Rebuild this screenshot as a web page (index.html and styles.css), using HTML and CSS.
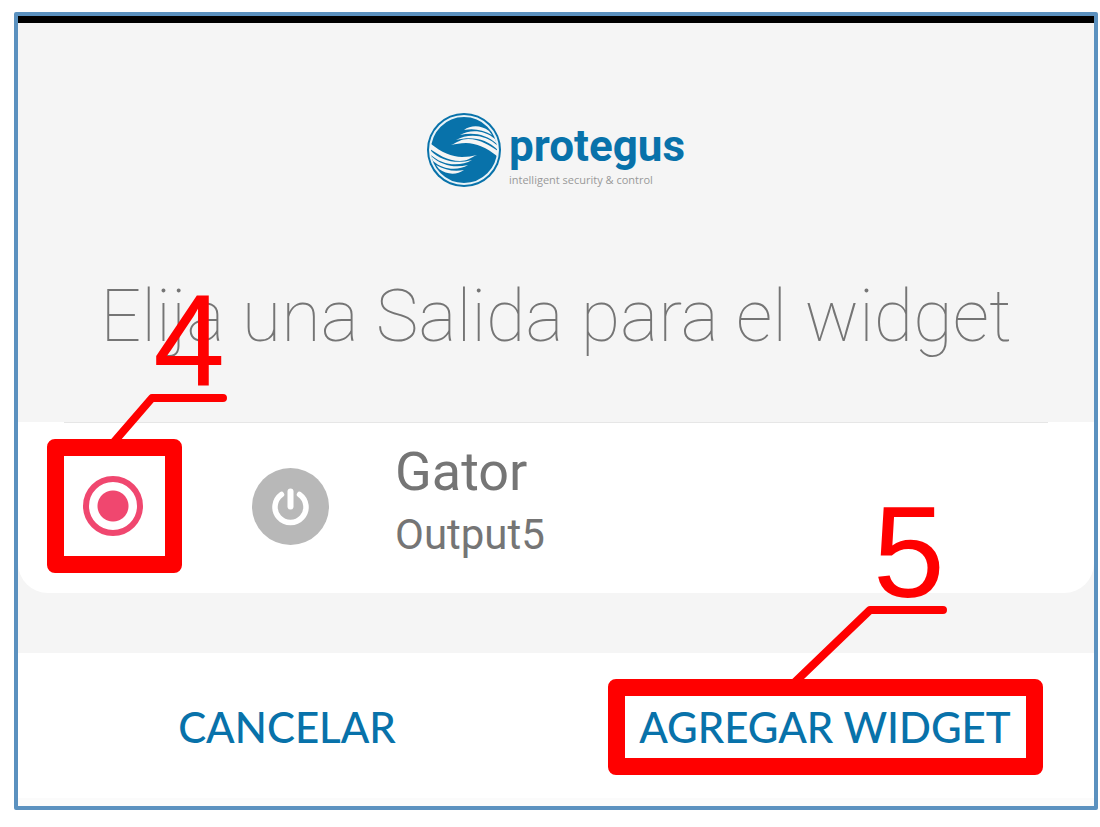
FILE: index.html
```html
<!DOCTYPE html>
<html lang="es">
<head>
<meta charset="utf-8">
<meta name="viewport" content="width=device-width, initial-scale=1">
<title>Elija una Salida para el widget</title>
<link rel="stylesheet" href="styles.css">
</head>
<body>
<main class="screen">
  <header class="header">
    <div class="brand">
      <svg class="brand-mark" viewBox="0 0 74 74" aria-hidden="true">
        <circle cx="37" cy="37" r="37" fill="#0872aa"/>
        <circle cx="37" cy="37" r="34" fill="none" stroke="#e8f3f8" stroke-width="2"/>
        <g id="wing" fill="#f5f5f5">
          <path d="M37 17C44 12 54 12 62 18L65 22C56 17 47 15 37 17Z"/>
          <path d="M33 22C43 16 58 17 68 26L70 31C59 21 46 19 33 22Z"/>
          <path d="M29 27C41 20 59 21 71 33L71 37C59 25 44 23 29 27Z"/>
          <path d="M24 32C31 29 34 26 41 26C54 26 63 33 71 38L70 43C60 35 49 30 39 30C33 30 29 31 24 32Z"/>
        </g>
        <use href="#wing" transform="rotate(180 37 37)"/>
      </svg>
      <div class="brand-text">
        <span class="brand-name">protegus</span>
        <span class="brand-tagline">intelligent security &amp; control</span>
      </div>
    </div>
    <h1 class="title">Elija una Salida para el widget</h1>
  </header>

  <section class="outputs">
    <div class="output">
      <span class="marked marked-radio">
        <input class="radio" type="radio" name="output" id="output5" checked>
        <span class="frame"></span>
        <span class="callout callout-radio">
          <span class="callout-number">4</span>
          <svg class="leader-radio" viewBox="0 0 122 50" aria-hidden="true"><path d="M7 49L46 4H117"/></svg>
        </span>
      </span>
      <svg class="power" viewBox="0 0 77 77" aria-hidden="true">
        <circle cx="38.5" cy="38.5" r="38.5" fill="#b8b8b8"/>
        <g fill="none" stroke="#fff" stroke-linecap="round">
          <path d="M29.5 26.5A15.5 15.5 0 1 0 47.5 26.5" stroke-width="5.5"/>
          <path d="M38.5 23.5V38.5" stroke-width="6"/>
        </g>
      </svg>
      <label class="output-text" for="output5">
        <span class="output-name">Gator</span>
        <span class="output-detail">Output5</span>
      </label>
    </div>
  </section>

  <footer class="actions">
    <button class="action" type="button">CANCELAR</button>
    <button class="action" type="button">
      <span class="marked marked-button">AGREGAR WIDGET
        <span class="frame"></span>
        <span class="callout callout-button">
          <span class="callout-number">5</span>
          <svg class="leader-button" viewBox="0 0 160 78" aria-hidden="true"><path d="M5 78L82 4H155"/></svg>
        </span>
      </span>
    </button>
  </footer>
</main>
</body>
</html>
```
FILE: styles.css
```css
* {
  box-sizing: border-box;
}

body {
  margin: 0;
  padding: 12px 2px 16px 14px;
  background: #fff;
  color: #757575;
  font-family: Roboto, sans-serif;
}

.screen {
  border: 4px solid #5b91bf;
  border-radius: 2px;
  background: #f5f5f5;
}

.header {
  display: flex;
  flex-direction: column;
  align-items: center;
  gap: 84px;
  padding: 89px 16px 60px;
  border-top: 7px solid #000;
}

.brand {
  display: flex;
  align-items: center;
  gap: 8px;
}

.brand-mark {
  width: 74px;
  height: 74px;
}

.brand-text {
  display: flex;
  flex-direction: column;
  padding-top: 8px;
}

.brand-name {
  color: #0872aa;
  font-size: 44px;
  font-weight: 700;
  line-height: 52px;
}

.brand-tagline {
  color: #999;
  font-family: "Open Sans", sans-serif;
  font-size: 11px;
  line-height: 16px;
}

.title {
  margin: 0;
  font-size: 72px;
  font-weight: 100;
  line-height: 90px;
  text-align: center;
}

.outputs {
  margin-bottom: 60px;
  border-radius: 0 0 30px 30px;
  background: #fff;
}

.outputs::before {
  content: "";
  display: block;
  height: 1px;
  margin: 0 46px;
  background: #e6e6e6;
}

.output {
  display: flex;
  align-items: center;
  padding: 20px 46px 24px 65px;
}

.marked {
  position: relative;
}

.marked-radio {
  display: flex;
  margin-right: 109px;
}

.radio {
  appearance: none;
  width: 60px;
  height: 60px;
  margin: 0;
  border: 6px solid #f0476f;
  border-radius: 50%;
  background: radial-gradient(circle, #f0476f 15px, #fff 16px);
}

.frame {
  position: absolute;
  border: 17px solid #f00;
  border-radius: 8px;
  pointer-events: none;
}

.marked-radio .frame {
  inset: -37px -39px -37px -36px;
}

.marked-button .frame {
  inset: -23px -32px -23px -31px;
}

.callout {
  position: absolute;
  display: flex;
  flex-direction: column;
  align-items: flex-end;
  gap: 9px;
  pointer-events: none;
}

.callout-radio {
  left: 23px;
  bottom: 92px;
}

.callout-button {
  right: 63px;
  bottom: 68px;
}

.callout-number {
  padding-right: 3px;
  color: #f00;
  font-family: "Liberation Sans", sans-serif;
  font-size: 129px;
  font-weight: 400;
  line-height: 90px;
}

.callout path {
  fill: none;
  stroke: #f00;
  stroke-width: 8px;
  stroke-linecap: round;
  stroke-linejoin: round;
}

.leader-radio {
  width: 122px;
  height: 50px;
}

.leader-button {
  width: 160px;
  height: 78px;
}

.power {
  width: 77px;
  height: 77px;
  margin-right: 66px;
}

.output-text {
  display: flex;
  flex-direction: column;
}

.output-name {
  font-size: 54px;
  line-height: 58px;
}

.output-detail {
  font-size: 42px;
  line-height: 68px;
}

.actions {
  display: grid;
  grid-template-columns: 1fr 1fr;
  border-bottom: 8px solid #fbfbfb;
  background: #fff;
}

.action {
  padding: 49px 0 46px;
  border: 0;
  background: none;
  color: #0872aa;
  font-family: Lato, sans-serif;
  font-size: 42px;
  font-weight: 500;
  line-height: 50px;
}

.marked-button {
  display: inline-block;
}
```
